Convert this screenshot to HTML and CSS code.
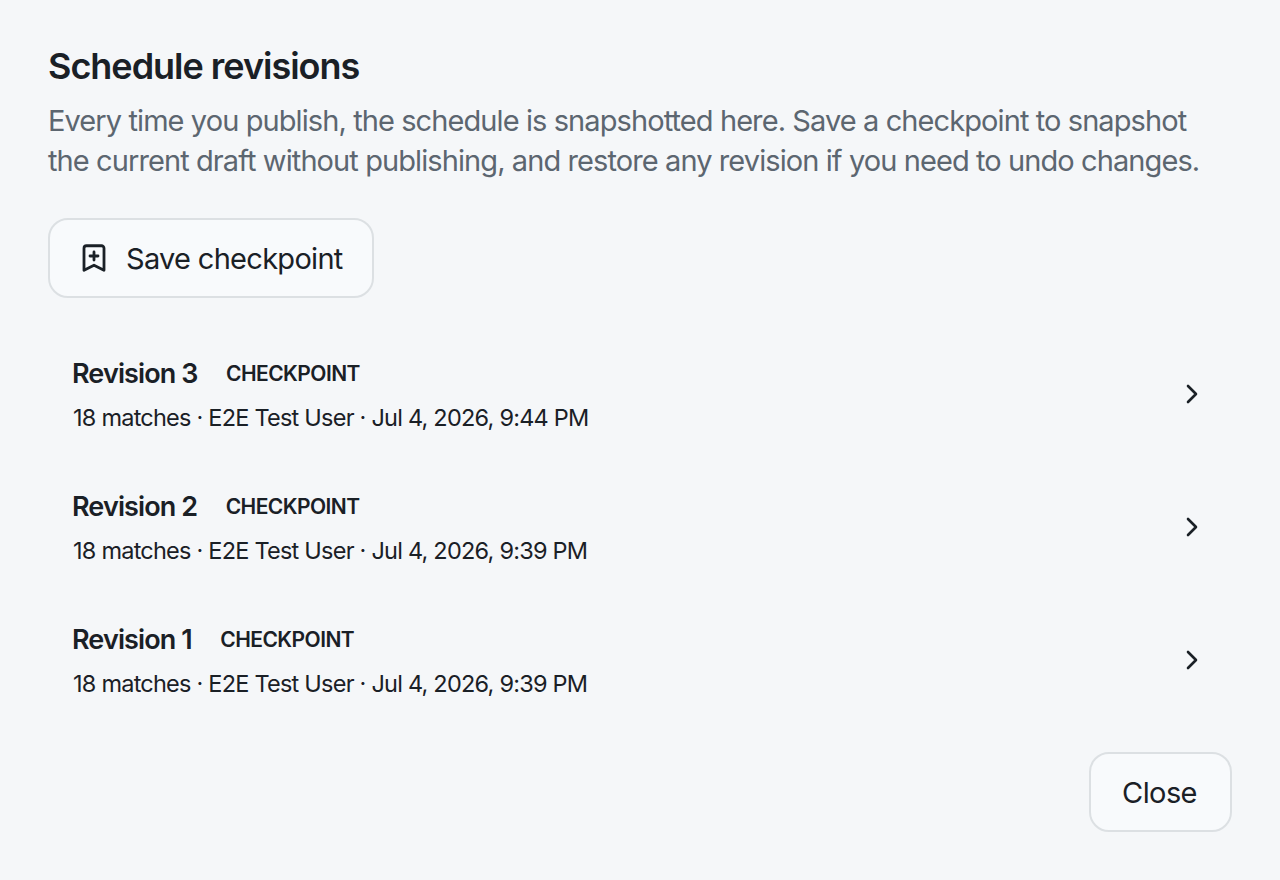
FILE: index.html
```html
<!DOCTYPE html>
<html lang="en">
<head>
<meta charset="utf-8">
<title>Schedule revisions</title>
<link rel="stylesheet" href="styles.css">
</head>
<body>
<main class="dialog">
  <h1 class="title">Schedule revisions</h1>
  <p class="desc">Every time you publish, the schedule is snapshotted here. Save a checkpoint to snapshot<br>the current draft without publishing, and restore any revision if you need to undo changes.</p>
  <button class="btn btn-save" type="button">
    <svg class="icon" width="32" height="32" viewBox="0 0 32 32" fill="none" stroke="currentColor" stroke-width="2.800" stroke-linecap="round" stroke-linejoin="round"><path d="M8.500 3.750h15a2.500 2.500 0 0 1 2.500 2.500v22l-10-5-10 5v-22a2.500 2.500 0 0 1 2.500-2.500z"/><path d="M16 10v8M12 14h8"/></svg>
    <span>Save checkpoint</span>
  </button>
  <ul class="list">
    <li class="row">
      <div class="info">
        <div class="head"><span class="name">Revision 3</span><span class="tag">CHECKPOINT</span></div>
        <div class="meta">18 matches · E2E Test User · Jul 4, 2026, 9:44 PM</div>
      </div>
      <svg class="chev" width="24" height="24" viewBox="0 0 24 24" fill="none" stroke="currentColor" stroke-width="2.600" stroke-linecap="round" stroke-linejoin="round"><path d="M8 4l8 8-8 8"/></svg>
    </li>
    <li class="row">
      <div class="info">
        <div class="head"><span class="name">Revision 2</span><span class="tag">CHECKPOINT</span></div>
        <div class="meta">18 matches · E2E Test User · Jul 4, 2026, 9:39 PM</div>
      </div>
      <svg class="chev" width="24" height="24" viewBox="0 0 24 24" fill="none" stroke="currentColor" stroke-width="2.600" stroke-linecap="round" stroke-linejoin="round"><path d="M8 4l8 8-8 8"/></svg>
    </li>
    <li class="row">
      <div class="info">
        <div class="head"><span class="name">Revision 1</span><span class="tag">CHECKPOINT</span></div>
        <div class="meta">18 matches · E2E Test User · Jul 4, 2026, 9:39 PM</div>
      </div>
      <svg class="chev" width="24" height="24" viewBox="0 0 24 24" fill="none" stroke="currentColor" stroke-width="2.600" stroke-linecap="round" stroke-linejoin="round"><path d="M8 4l8 8-8 8"/></svg>
    </li>
  </ul>
  <div class="actions"><button class="btn btn-close" type="button">Close</button></div>
</main>
</body>
</html>
```
FILE: styles.css
```css
* { box-sizing: border-box; }
html, body { margin: 0; padding: 0; }
body {
  width: 1280px;
  height: 880px;
  overflow: hidden;
  background: #f5f7f9;
  color: #1a2026;
  font-family: Inter, "Liberation Sans", sans-serif;
}
.dialog { padding: 44px 48px 48px; display: flex; flex-direction: column; }
.title { margin: 0; font-size: 36px; line-height: 44px; font-weight: 600; letter-spacing: -1.02px; }
.desc { margin: 13px 0 0; font-size: 29px; line-height: 40px; color: #5c6670; letter-spacing: -.91px; white-space: nowrap; }
.btn {
  font-family: inherit;
  color: #1a2026;
  background: #f8fafc;
  border: 2px solid #dce0e3;
  border-radius: 20px;
  height: 80px;
  font-size: 29px;
  letter-spacing: -.7px;
  display: inline-flex;
  align-items: center;
}
.btn-save { margin-top: 37px; align-self: flex-start; width: 326px; padding: 0 0 0 28px; gap: 16px; }
.icon { flex: none; }
.list { list-style: none; margin: 35px 0 0; padding: 0; display: flex; flex-direction: column; }
.row { height: 133px; padding: 22px 28px 0 24px; display: flex; justify-content: space-between; align-items: center; }
.row .info { align-self: flex-start; }
.chev { margin-top: -34px; }
.head { display: flex; align-items: center; gap: 28.500px; height: 36px; }
.name { font-size: 27px; font-weight: 600; letter-spacing: -.9px; }
.tag { font-size: 21px; font-weight: 600; letter-spacing: -.55px; }
.meta { margin-top: 9px; margin-left: 1px; font-size: 23.500px; line-height: 36px; letter-spacing: -.77px; word-spacing: 0; white-space: nowrap; }
.actions { display: flex; justify-content: flex-end; margin-top: 20px; }
.btn-close { width: 143px; justify-content: center; padding: 0 2px 0 0; letter-spacing: -.6px; }
```
